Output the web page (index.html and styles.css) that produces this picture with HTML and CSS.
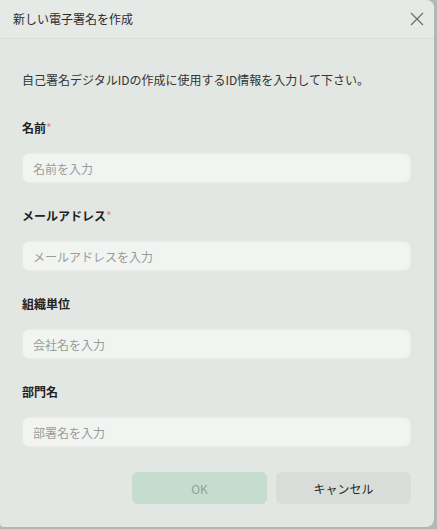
FILE: index.html
```html
<!DOCTYPE html>
<html lang="ja">
<head>
<meta charset="utf-8">
<title>新しい電子署名を作成</title>
<link rel="stylesheet" href="styles.css">
</head>
<body>
<div class="dialog">
  <div class="header">
    <div class="title">新しい電子署名を作成</div>
    <button class="close" aria-label="閉じる">
      <svg width="14" height="14" viewBox="0 0 14 14"><path d="M1 1L13 13M13 1L1 13" stroke="#6b6e6b" stroke-width="1.2" fill="none"/></svg>
    </button>
  </div>
  <div class="body">
    <p class="desc">自己署名デジタルIDの作成に使用するID情報を入力して下さい。</p>
    <div class="field">
      <label class="label">名前<span class="req">*</span></label>
      <div class="input">名前を入力</div>
    </div>
    <div class="field">
      <label class="label">メールアドレス<span class="req">*</span></label>
      <div class="input">メールアドレスを入力</div>
    </div>
    <div class="field">
      <label class="label">組織単位</label>
      <div class="input">会社名を入力</div>
    </div>
    <div class="field">
      <label class="label">部門名</label>
      <div class="input">部署名を入力</div>
    </div>
    <div class="actions">
      <button class="btn ok">OK</button>
      <button class="btn cancel">キャンセル</button>
    </div>
  </div>
</div>
</body>
</html>
```
FILE: styles.css
```css
* { box-sizing: border-box; }
html, body { margin: 0; padding: 0; }
body {
  width: 437px;
  height: 529px;
  background: #b4b8b4;
  font-family: "Noto Sans CJK JP", "Noto Sans", sans-serif;
  color: #222;
  overflow: hidden;
}
.dialog {
  width: 434px;
  height: 527px;
  background: #e3e7e3;
  border-radius: 0 8px 8px 4px;
  overflow: hidden;
}
.header {
  height: 39px;
  background: #e6eae6;
  border-bottom: 1px solid #d9ddd9;
  display: flex;
  align-items: center;
  justify-content: space-between;
  padding: 0 10px 0 13px;
}
.title {
  font-size: 12px;
  color: #2a2a2a;
  line-height: 1;
}
.close {
  border: none;
  background: none;
  padding: 0;
  width: 14px;
  height: 14px;
  display: flex;
}
.body {
  padding: 0 23px 0 22px;
}
.desc {
  margin: 33px 0 0;
  font-size: 12px;
  line-height: 16px;
  color: #333;
}
.field {
  display: flex;
  flex-direction: column;
}
.label {
  margin-top: 32px;
  font-size: 12px;
  line-height: 16px;
  font-weight: bold;
  color: #222;
}
.req { color: #d9847f; font-weight: normal; }
.input {
  margin-top: 17px;
  height: 30px;
  background: #f1f4f1;
  border: 1px solid #e8ebe8;
  border-radius: 7px;
  padding: 0 10px;
  display: flex;
  align-items: center;
  font-size: 12px;
  color: #9a9c9a;
}
.field + .field .label { margin-top: 25px; }
.actions {
  display: flex;
  justify-content: flex-end;
  gap: 9px;
  margin-top: 25px;
}
.btn {
  width: 135px;
  height: 32px;
  border: none;
  border-radius: 6px;
  font-family: inherit;
  font-size: 12px;
}
.ok {
  background: #c6dccf;
  color: #8fa397;
}
.cancel {
  background: #d9ddd9;
  color: #2a2a2a;
}
```
